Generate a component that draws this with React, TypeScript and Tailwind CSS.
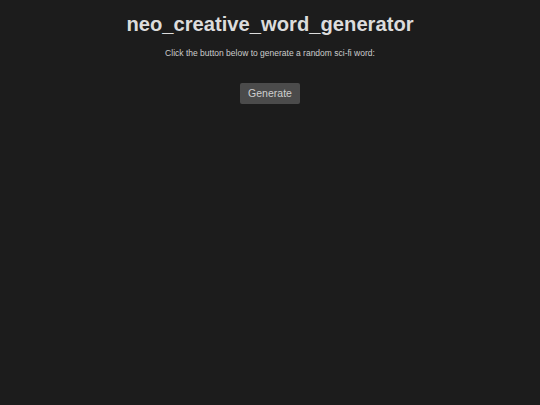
export default function App() {
	return (
		<div className="min-h-[405px] bg-[#1c1c1c] text-center font-['Liberation_Sans',Arial,sans-serif] text-[#dddddd]">
			<h1 className="pt-[11px] text-[20.2px] font-bold leading-[26px] text-[#dcdcdc]">
				neo_creative_word_generator
			</h1>
			<p className="mt-[11px] text-[8.5px] leading-[11px] text-[#cccccc]">
				Click the button below to generate a random sci-fi word:
			</p>
			<button className="mt-[24px] h-[21px] rounded-[2px] bg-[#4b4b4b] px-[8px] text-[10.5px] text-[#cfcfcf]">
				Generate
			</button>
		</div>
	);
}
